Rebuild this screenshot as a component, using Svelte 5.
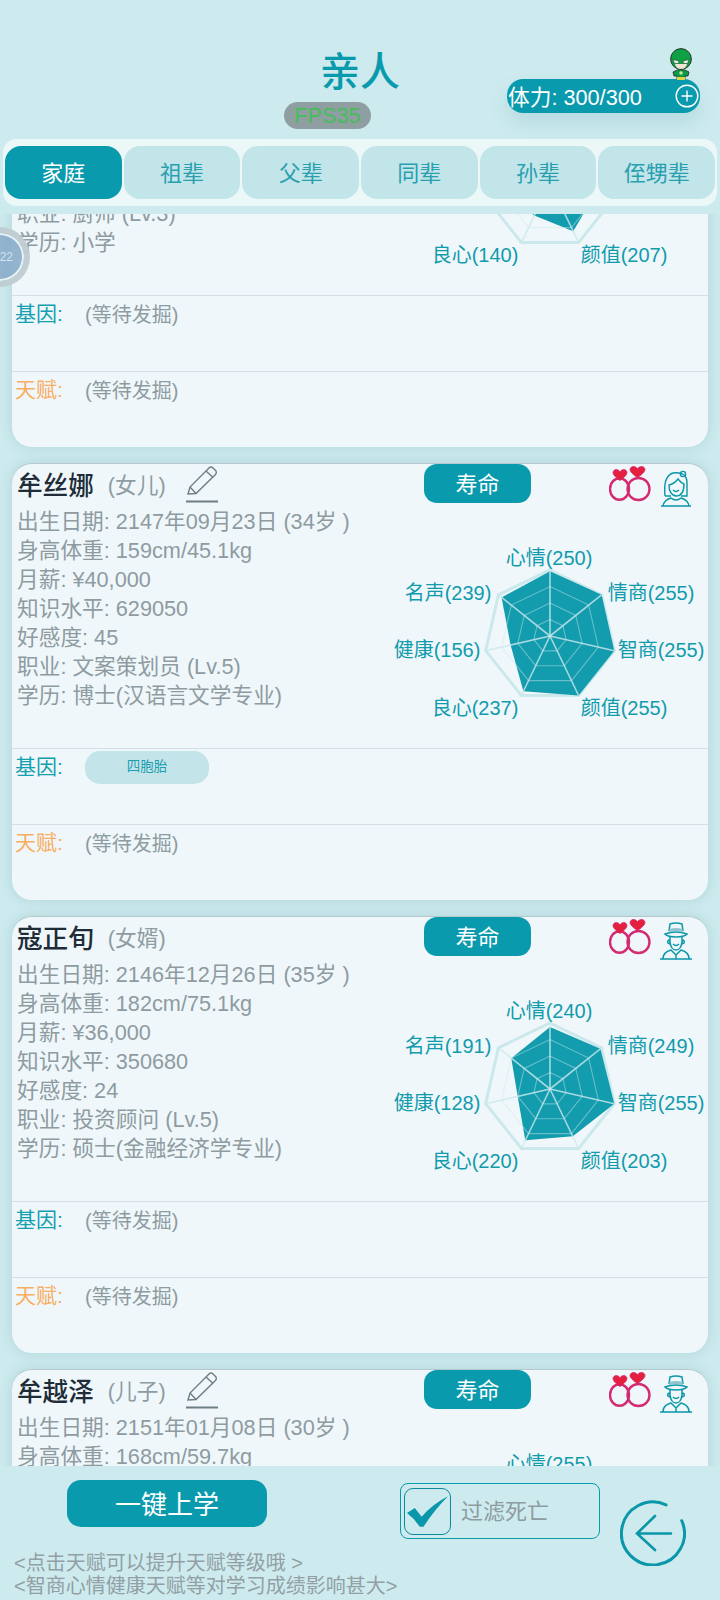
<script>
	const axes = ['心情', '情商', '智商', '颜值', '良心', '健康', '名声'];
	const labelPos = [
		[-1, -78],
		[101, -43],
		[111, 14],
		[74, 72],
		[-75, 72],
		[-113, 14],
		[-102, -43]
	];
	const R = 66;
	const pt = (i, r) => {
		const a = (i * 2 * Math.PI) / 7 - Math.PI / 2;
		return [(Math.cos(a) * r).toFixed(1), (Math.sin(a) * r).toFixed(1)];
	};
	const ring = (r) => axes.map((_, i) => pt(i, r).join(',')).join(' ');
	const shape = (vals) => vals.map((v, i) => pt(i, (R * v) / 255).join(',')).join(' ');

	const cards = [
		{
			name: '牟建国', rel: '(本人)', edit: false, icon: 'man',
			rows: ['出生日期: 2120年03月11日 (61岁 )', '身高体重: 171cm/68.2kg', '月薪: ¥12,000', '知识水平: 45200', '好感度: 60', '职业: 厨师 (Lv.3)', '学历: 小学'],
			stats: [210, 190, 180, 207, 140, 170, 160], gene: null
		},
		{
			name: '牟丝娜', rel: '(女儿)', edit: true, icon: 'woman',
			rows: ['出生日期: 2147年09月23日 (34岁 )', '身高体重: 159cm/45.1kg', '月薪: ¥40,000', '知识水平: 629050', '好感度: 45', '职业: 文案策划员 (Lv.5)', '学历: 博士(汉语言文学专业)'],
			stats: [250, 255, 255, 255, 237, 156, 239], gene: '四胞胎'
		},
		{
			name: '寇正旬', rel: '(女婿)', edit: false, icon: 'man',
			rows: ['出生日期: 2146年12月26日 (35岁 )', '身高体重: 182cm/75.1kg', '月薪: ¥36,000', '知识水平: 350680', '好感度: 24', '职业: 投资顾问 (Lv.5)', '学历: 硕士(金融经济学专业)'],
			stats: [240, 249, 255, 203, 220, 128, 191], gene: null
		},
		{
			name: '牟越泽', rel: '(儿子)', edit: true, icon: 'man',
			rows: ['出生日期: 2151年01月08日 (30岁 )', '身高体重: 168cm/59.7kg', '月薪: ¥28,000', '知识水平: 210400', '好感度: 52', '职业: 程序员 (Lv.4)', '学历: 本科'],
			stats: [255, 230, 240, 210, 200, 180, 170], gene: null
		}
	];
	const tabs = ['家庭', '祖辈', '父辈', '同辈', '孙辈', '侄甥辈'];
</script>

<div class="page">
	<header class="top">
		<h1>亲人</h1>
		<div class="stamina">
			<svg class="hero" viewBox="0 0 26 32" width="26" height="32">
				<path d="M5 24 Q13 19 21 24 L20 28 H17 V31 H9 V28 H6Z" fill="#0f9a44" stroke="#1a2a22" stroke-width=".8" />
				<rect x="9" y="29" width="8" height="3" fill="#e3d040" />
				<circle cx="13" cy="25" r="1.8" fill="#bfe8b0" />
				<circle cx="13" cy="11" r="10.4" fill="#10a044" stroke="#1a2a22" stroke-width=".9" />
				<path d="M7 16 H19 Q18 21 13 21 Q8 21 7 16Z" fill="#f3e3d6" />
				<path d="M5 11.5 L11 13 L10.5 15.5 H6.5Z M21 11.5 L15 13 L15.5 15.5 H19.5Z" fill="#e8efe8" stroke="#1a2a22" stroke-width=".5" />
			</svg>
			<span>体力: 300/300</span>
			<svg viewBox="0 0 24 24" width="24" height="24" fill="none" stroke="#fff" stroke-width="1.4">
				<circle cx="12" cy="12" r="10.8" />
				<path d="M12 6.5v11M6.5 12h11" />
			</svg>
		</div>
		<div class="fps">FPS35</div>
	</header>

	<nav class="tabs">
		{#each tabs as tab, i}
			<div class="tab" class:active={i === 0}>{tab}</div>
		{/each}
	</nav>

	<main class="list">
		<div class="scroller">
			{#each cards as card}
				<article class="card">
					<section class="info">
						<div class="left">
							<div class="name-row">
								<span class="name">{card.name}</span>
								<span class="rel">{card.rel}</span>
								{#if card.edit}
									<svg class="pencil" viewBox="0 0 32 38" width="32" height="38" fill="none" stroke="#6f7d84" stroke-width="1.4">
										<path d="M2 29 L4 22 L23 3 Q25 1 27 3 L30 6 Q31 8 29.5 9.5 L10 28.5 Z" />
										<path d="M4 22 L10 28.5 M20 6 L27 12.5" />
										<path d="M0 36.5 H32" stroke-width="2" />
									</svg>
								{/if}
							</div>
							{#each card.rows as row}
								<div class="row">{row}</div>
							{/each}
						</div>
						<div class="right">
							<div class="right-head">
								<button class="life">寿命</button>
								<svg class="rings" viewBox="0 0 42 36" width="42" height="36" fill="none" stroke="#d42a72" stroke-width="2.4">
									<ellipse cx="10.5" cy="23" rx="9.5" ry="10.8" />
									<circle cx="29.5" cy="23" r="11" />
									<path d="M11 14.5 C5 10.5 3 7 4.5 5 C6 3 9.5 3 11 6 C12.5 3 16 3 17.5 5 C19 7 17 10.5 11 14.5Z" fill="#e5203f" stroke="#d42a72" stroke-width=".8" />
									<path d="M28.5 11.5 C22 7.5 20 4 21.5 2 C23 0 27 0 28.5 3 C30 0 34 0 35.5 2 C37 4 35 7.5 28.5 11.5Z" fill="#e5203f" stroke="#d42a72" stroke-width=".8" />
								</svg>
								{#if card.icon === 'woman'}
									<svg class="person" viewBox="0 0 32 38" width="32" height="38" fill="none" stroke="#0a97a9" stroke-width="1.4">
										<path d="M1 37 H31 M3 37 Q4 31 11 29 Q16 33 21 29 Q28 31 29 37" />
										<path d="M5 27 Q3 7 13 4 Q27 2 27 14 L27 27 H21 M5 27 H11" />
										<path d="M9 16 Q14 15 18 10 Q21 14 24 15 Q24 27 16 27 Q9 26 9 16Z" />
										<path d="M13 21 Q16 24 19 21" />
										<circle cx="23" cy="5" r="2.6" />
									</svg>
								{:else}
									<svg class="person" viewBox="0 0 32 38" width="32" height="38" fill="none" stroke="#0a97a9" stroke-width="1.5">
										<path d="M0 37 H32 M3 37 Q3 30 11 28 L16 33 L21 28 Q29 30 29 37 M16 33 V37" />
										<path d="M10 15 V20 Q11 28 16 28 Q21 28 22 20 V15 M10 18 Q7 18 8 21 L10 22 M22 18 Q25 18 24 21 L22 22" />
										<path d="M5 12 Q16 8 27 12 Q24 15 16 15 Q8 15 5 12Z" />
										<path d="M9 9 L10 2 Q16 0 22 2 L23 9" />
										<path d="M9.5 7 Q16 5 22.5 7 L23 10 Q16 8 9 10Z" fill="#8fc4cc" stroke="none" />
										<path d="M13 22 Q16 25 19 22" />
									</svg>
								{/if}
							</div>
							<svg class="radar" viewBox="-162 -133 320 245" width="320" height="245">
								<polygon points={ring(66)} fill="none" stroke="#cbe9ec" stroke-width="3" />
								<polygon points={shape(card.stats)} fill="#0a99ab" fill-opacity=".97" />
								{#each [49.5, 33, 16.5] as r}
									<polygon points={ring(r)} fill="none" stroke="#cbe9ec" stroke-width="1.1" stroke-opacity=".45" />
								{/each}
								{#each axes as _, i}
									<line x1="0" y1="0" x2={pt(i, R)[0]} y2={pt(i, R)[1]} stroke="#cbe9ec" stroke-width="1.6" stroke-opacity=".8" />
								{/each}
								{#each axes as axis, i}
									<text x={labelPos[i][0]} y={labelPos[i][1]}>{axis}({card.stats[i]})</text>
								{/each}
							</svg>
						</div>
					</section>
					<section class="extra">
						<span class="label gene">基因:</span>
						{#if card.gene}
							<span class="tag">{card.gene}</span>
						{:else}
							<span class="wait">(等待发掘)</span>
						{/if}
					</section>
					<section class="extra">
						<span class="label talent">天赋:</span>
						<span class="wait">(等待发掘)</span>
					</section>
				</article>
			{/each}
		</div>
	</main>

	<footer class="bottom">
		<div class="col-left">
			<button class="oneclick">一键上学</button>
			<p class="hint">&lt;点击天赋可以提升天赋等级哦 &gt;<br />&lt;智商心情健康天赋等对学习成绩影响甚大&gt;</p>
		</div>
		<div class="filter">
			<span class="check">
				<svg viewBox="0 0 46 46" width="46" height="46">
					<path d="M2 25 L10 20 L17 29 Q28 16 44 8 Q30 22 19 39 H15 Q10 31 2 25Z" fill="#0a97a9" />
				</svg>
			</span>
			<span class="filter-text">过滤死亡</span>
		</div>
		<svg class="back" viewBox="0 0 66 66" width="66" height="66" fill="none" stroke="#0a97a9" stroke-linecap="round">
			<path d="M46.1 4.9 A31.5 31.5 0 1 0 61.7 20.7" stroke-width="3" />
			<path d="M51 33.5 H17 M35 16 L17 33.5 L35 50" stroke-width="2.6" />
		</svg>
	</footer>

	<div class="float-ball"><span>22</span></div>
</div>

<style>
	:global(body) {
		background: #cdebee;
	}

	.page {
		position: relative;
		width: 720px;
		height: 1600px;
		overflow: hidden;
		background: #cdebee;
		font-family: "Liberation Sans", "Noto Sans CJK SC", sans-serif;
		display: flex;
		flex-direction: column;
	}

	.top {
		height: 139px;
		box-sizing: border-box;
		padding-top: 47px;
		flex: none;
		position: relative;
	}

	h1 {
		margin: 0 auto;
		width: fit-content;
		font-size: 40px;
		line-height: 50px;
		font-weight: 500;
		color: #0a9aad;
	}

	.fps {
		width: 87px;
		height: 27px;
		margin: 5px 0 0 284px;
		border-radius: 14px;
		background: #8f9fa1;
		color: #45bd5a;
		font-size: 21.7px;
		line-height: 27px;
		text-align: center;
	}

	.stamina {
		position: absolute;
		left: 507px;
		top: 79px;
		width: 193px;
		height: 34px;
		box-sizing: border-box;
		padding: 0 1px 0 1px;
		border-radius: 16px;
		background: #0a9aad;
		color: #fff;
		font-size: 21.7px;
		display: flex;
		align-items: center;
		justify-content: space-between;
		box-shadow: 0 10px 20px rgba(0, 110, 130, 0.12);
	}

	.stamina span {
		padding-bottom: 2px;
	}

	.hero {
		position: absolute;
		left: 161px;
		top: -31px;
	}

	.tabs {
		flex: none;
		height: 67px;
		margin: 0 3px;
		box-sizing: border-box;
		padding: 7px 2px;
		background: #ecf7f8;
		border-radius: 14px;
		display: flex;
		gap: 2px;
	}

	.tab {
		flex: 1;
		box-sizing: border-box;
		padding-bottom: 3px;
		border-radius: 16px;
		background: #c2e5e9;
		color: #2a9fb0;
		font-size: 22px;
		display: flex;
		align-items: center;
		justify-content: center;
	}

	.tab.active {
		background: #0a9aad;
		color: #fff;
	}

	.list {
		flex: none;
		height: 1252px;
		margin-top: 8px;
		padding: 0 12px;
		overflow: hidden;
	}

	.scroller {
		margin-top: -204px;
		display: flex;
		flex-direction: column;
		gap: 16px;
	}

	.card {
		flex: none;
		height: 437px;
		box-sizing: border-box;
		background: #eff7fa;
		border-radius: 20px;
		border-top: 1px solid #b5c9cd;
		box-shadow: 0 0 14px rgba(0, 80, 100, 0.14);
		display: flex;
		flex-direction: column;
	}

	.info {
		height: 284px;
		flex: none;
		display: flex;
		justify-content: space-between;
		overflow: hidden;
	}

	.left {
		padding: 0 0 0 5px;
	}

	.name-row {
		height: 39px;
		display: flex;
		align-items: center;
		margin-bottom: 4px;
	}

	.name {
		font-size: 25.6px;
		font-weight: 500;
		color: #202c38;
	}

	.rel {
		margin-left: 14px;
		font-size: 21.7px;
		color: #8e9ba1;
	}

	.pencil {
		margin-left: 20px;
	}

	.row {
		font-size: 21.7px;
		line-height: 29px;
		color: #8e9ba1;
		white-space: nowrap;
	}

	.right {
		width: 320px;
		flex: none;
	}

	.right-head {
		height: 39px;
		display: flex;
		align-items: flex-start;
		padding-left: 36px;
	}

	.life {
		width: 107px;
		height: 39px;
		margin: 0;
		padding: 0 0 3px;
		border: none;
		border-radius: 13px;
		background: #0a9aad;
		color: #fff;
		font-family: inherit;
		font-size: 22px;
	}

	.rings {
		margin: 2px 0 0 78px;
	}

	.person {
		margin: 5px 0 0 9px;
	}

	.radar {
		display: block;
	}

	.radar text {
		font-size: 20px;
		fill: #129bad;
		text-anchor: middle;
		dominant-baseline: central;
	}

	.extra {
		height: 76px;
		flex: none;
		box-sizing: border-box;
		border-top: 1px solid #d3dfe2;
		padding: 0 0 0 3px;
		display: flex;
		align-items: flex-start;
	}

	.label {
		width: 70px;
		flex: none;
		font-size: 21px;
		line-height: 36px;
	}

	.gene {
		color: #14a0b0;
	}

	.talent {
		color: #f8ae62;
	}

	.wait {
		font-size: 20px;
		line-height: 38px;
		color: #8e9ba1;
	}

	.tag {
		width: 124px;
		height: 33px;
		margin-top: 2px;
		border-radius: 15px;
		background: #c3e4e9;
		color: #1e9fb0;
		font-size: 13.5px;
		line-height: 32px;
		text-align: center;
	}

	.bottom {
		flex: 1;
		min-height: 0;
		display: flex;
	}

	.col-left {
		width: 400px;
		flex: none;
	}

	.oneclick {
		display: block;
		width: 200px;
		height: 47px;
		margin: 14px 0 0 67px;
		padding: 0 0 3px;
		border: none;
		border-radius: 14px;
		background: #0a9aad;
		color: #fff;
		font-family: inherit;
		font-size: 26px;
	}

	.hint {
		margin: 25px 0 0 14px;
		font-size: 20px;
		line-height: 23px;
		color: #929fa4;
		white-space: nowrap;
	}

	.filter {
		width: 200px;
		height: 56px;
		margin-top: 17px;
		box-sizing: border-box;
		border: 1px solid #0a9aad;
		border-radius: 8px;
		display: flex;
		align-items: center;
		gap: 10px;
		padding-left: 3px;
		color: #8e9ba1;
		font-size: 22px;
	}

	.filter-text {
		padding-bottom: 4px;
	}

	.check {
		width: 47px;
		height: 47px;
		box-sizing: border-box;
		border: 1.5px solid #0a8a9c;
		border-radius: 9px;
		display: flex;
		align-items: center;
		justify-content: center;
	}

	.back {
		margin: 34px 0 0 20px;
		flex: none;
	}

	.float-ball {
		position: absolute;
		left: -30px;
		top: 227px;
		width: 60px;
		height: 60px;
		box-sizing: border-box;
		border-radius: 50%;
		border: 6px solid rgba(200, 210, 210, 0.85);
		background: #8fb0cc;
		box-shadow: inset 0 0 0 2px #e8f4f6;
		display: flex;
		align-items: center;
		justify-content: flex-end;
		color: #d5e5ee;
		font-size: 12px;
		padding-right: 11px;
		opacity: 0.95;
	}
</style>
